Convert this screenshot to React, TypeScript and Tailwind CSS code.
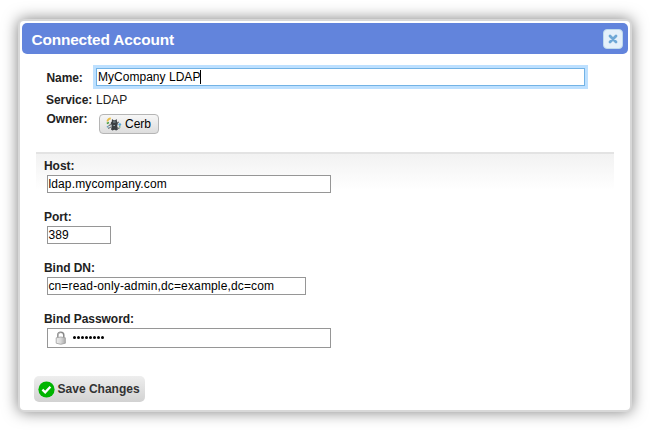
import type { ReactNode } from "react";

function CerbIcon() {
  return (
    <svg width="16" height="16" viewBox="0 0 16 16" className="shrink-0">
      <path d="M1.2 5.5C1.8 3.6 3 2.6 4.8 2.4" fill="none" stroke="#e8bd45" strokeWidth="1.7" />
      <path d="M.8 7.6l2.2-1" fill="none" stroke="#4fa046" strokeWidth="1.6" />
      <path d="M6 3l1.6 1.2h1.6L10.6 3l.4 2.5 1 1.2-.8 3.3.8 3.5-1.8 1-1.8-.8-2 .8-1.4-1 .8-3.5L4.6 7l1.2-1.5z" fill="#3a3f42" />
      <path d="M2.5 9.8l3-1.6M2.2 12.6l3.4-2" stroke="#686e70" strokeWidth="1.1" />
      <path d="M11 7l2-1M11 11.5l2.4 1.2" stroke="#686e70" strokeWidth="1.1" />
      <path d="M.9 10.4l1.8 1" stroke="#6b9cb6" strokeWidth="1.3" />
      <circle cx="13.8" cy="8.6" r="1.4" fill="#5ba6d2" />
      <path d="M7 6h2.6M7.4 9.5h1.6" stroke="#90a3a8" />
      <path d="M13.2 10.6l1.2.6" stroke="#5c9a5a" strokeWidth="1.2" />
    </svg>
  );
}

function LockIcon() {
  return (
    <svg width="12" height="14" viewBox="0 0 12 14" className="shrink-0">
      <defs>
        <linearGradient id="lockBody" x1="0" x2="1">
          <stop offset="0" stopColor="#eeeeee" />
          <stop offset="0.5" stopColor="#d8d8d8" />
          <stop offset="1" stopColor="#ababab" />
        </linearGradient>
      </defs>
      <path d="M2.8 7V4.2a3 3 0 0 1 6 0V7" fill="none" stroke="#888888" strokeWidth="1.5" />
      <path d="M3.2 7V4.4a2.4 2.4 0 0 1 2.4-2.7" fill="none" stroke="#c2c2c2" strokeWidth=".7" />
      <path d="M1.2 6.8q4.6-1.6 9.2 0v5.4q-4.6 2.2-9.2 0z" fill="url(#lockBody)" stroke="#a0a0a0" strokeWidth=".8" />
    </svg>
  );
}

function Label({ children, className = "" }: { children: ReactNode; className?: string }) {
  return <label className={`block font-bold tracking-[-0.05px] whitespace-nowrap text-[#222222] ${className}`}>{children}</label>;
}

function Field({ label, value, width }: { label: string; value: string; width: string }) {
  return (
    <div className="h-[51px]">
      <Label className="h-[17px] pt-px">{label}</Label>
      <div className={`ml-[3px] h-[18px] border border-[#969696] bg-white pl-[0.4px] leading-4 tracking-[0.15px] whitespace-nowrap text-black ${width}`}>
        {value}
      </div>
    </div>
  );
}

export default function App() {
  return (
    <main className="h-[438px] w-[654px] overflow-hidden bg-white pt-[19px] pl-[18px] font-['Liberation_Sans',Arial,sans-serif] text-[12px] leading-[14px] text-[#222222]">
      <section className="flex h-[393px] w-[614px] flex-col rounded-[6px] border-2 border-[#d8d8d8] bg-white p-[2px] shadow-[0_0_15px_rgba(0,0,0,0.5)]">
        <header className="flex h-[31px] shrink-0 items-center justify-between rounded-[5px] bg-[#6284dc] pr-[5px] pl-[9.4px]">
          <h1 className="pt-[2px] text-[15.4px] font-bold tracking-[-0.13px] whitespace-nowrap text-white">Connected Account</h1>
          <button aria-label="Close" className="mt-px flex size-5 items-center justify-center rounded-[4px] border border-[#bed9ec] bg-[#e5f0fa]">
            <svg width="10" height="10" viewBox="0 0 10 10">
              <path d="M2 2l6 6M8 2l-6 6" stroke="#6fa8d6" strokeWidth="2.8" strokeLinecap="round" />
            </svg>
          </button>
        </header>

        <div className="flex h-[98px] shrink-0 flex-col pl-6">
          <div className="mt-[14px] flex h-[18px]">
            <Label className="w-[49.6px] pt-[3px] pl-[0.4px]">Name:</Label>
            <div className="ml-[0.4px] flex w-[489px] border border-[#73b3e5] bg-white pl-px leading-4 text-black shadow-[0_0_0_3px_#bde0ff]">
              <span className="tracking-[0.03px]">MyCompany LDAP</span>
              <span className="mt-px h-[14px] w-px bg-black" />
            </div>
          </div>
          <div className="mt-[7px] flex h-[19px]">
            <Label className="w-[50px]">Service:</Label>
            <span>LDAP</span>
          </div>
          <div className="flex">
            <Label className="w-[53px] pl-[0.4px]">Owner:</Label>
            <button className="mt-[2px] flex h-5 w-[60px] items-center gap-[3px] rounded-[4px] border border-[#b5b5b5] bg-linear-to-b from-[#f7f7f7] to-[#dddddd] pl-[6px] text-black">
              <CerbIcon />
              <span>Cerb</span>
            </button>
          </div>
        </div>

        <div className="mx-[14px] h-[38px] w-[578px] shrink-0 border-t-2 border-[#e3e3e3] bg-linear-to-b from-[#f2f2f2] to-white">
          <div className="pt-[4px] pl-[8px]">
            <Field label="Host:" value="ldap.mycompany.com" width="w-[284px]" />
            <Field label="Port:" value="389" width="w-[64px]" />
            <Field label="Bind DN:" value="cn=read-only-admin,dc=example,dc=com" width="w-[259px]" />
            <Label className="h-[17px] pt-px">Bind Password:</Label>
            <div className="ml-[3px] flex h-5 w-[284px] items-center border border-[#969696] bg-white pl-[7px] text-black">
              <LockIcon />
              <span className="flex gap-px pb-px pl-[6px]" aria-label="Password">
                {Array.from({ length: 8 }, (_, i) => (
                  <span key={i} className="size-[3px] rounded-full bg-black" />
                ))}
              </span>
            </div>
          </div>
        </div>

        <button className="mt-[186px] ml-3 flex h-[26px] w-[111px] shrink-0 items-center rounded-[5px] bg-linear-to-b from-[#eeeeee] to-[#d2d2d2] pl-1 font-bold whitespace-nowrap text-[#333333]">
          <svg width="17" height="17" viewBox="0 0 17 17" className="mt-px mr-[2.6px] shrink-0">
            <circle cx="8.5" cy="8.5" r="8.1" fill="#00b400" />
            <path d="M4.4 8.6l2.8 2.8 5.2-5.6" fill="none" stroke="white" strokeWidth="2.3" />
          </svg>
          <span>Save Changes</span>
        </button>
      </section>
    </main>
  );
}
